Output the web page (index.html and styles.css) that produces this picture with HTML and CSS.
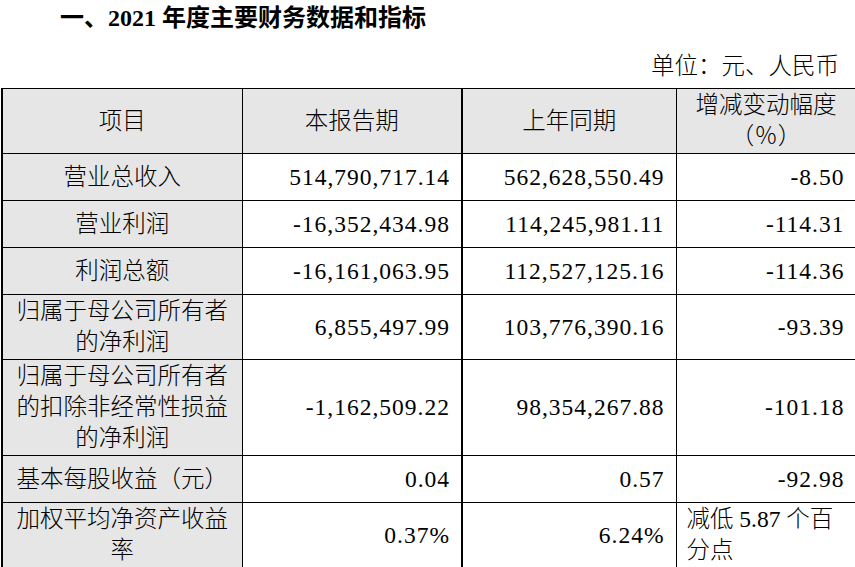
FILE: index.html
```html
<!DOCTYPE html>
<html lang="zh-CN">
<head>
<meta charset="utf-8">
<title>2021 年度主要财务数据和指标</title>
<link rel="stylesheet" href="styles.css">
</head>
<body>
<h1 class="title">一、2021 年度主要财务数据和指标</h1>
<p class="unit">单位：元、人民币</p>
<table class="fin">
  <colgroup>
    <col class="c1"><col class="c2"><col class="c3"><col class="c4">
  </colgroup>
  <thead>
    <tr class="head">
      <th class="label">项目</th>
      <th>本报告期</th>
      <th class="split">上年同期</th>
      <th>增减变动幅度（％）</th>
    </tr>
  </thead>
  <tbody>
    <tr>
      <td class="label">营业总收入</td>
      <td class="num">514,790,717.14</td>
      <td class="num split">562,628,550.49</td>
      <td class="num">-8.50</td>
    </tr>
    <tr>
      <td class="label">营业利润</td>
      <td class="num">-16,352,434.98</td>
      <td class="num split">114,245,981.11</td>
      <td class="num">-114.31</td>
    </tr>
    <tr>
      <td class="label">利润总额</td>
      <td class="num">-16,161,063.95</td>
      <td class="num split">112,527,125.16</td>
      <td class="num">-114.36</td>
    </tr>
    <tr>
      <td class="label">归属于母公司所有者的净利润</td>
      <td class="num">6,855,497.99</td>
      <td class="num split">103,776,390.16</td>
      <td class="num">-93.39</td>
    </tr>
    <tr>
      <td class="label">归属于母公司所有者的扣除非经常性损益的净利润</td>
      <td class="num">-1,162,509.22</td>
      <td class="num split">98,354,267.88</td>
      <td class="num">-101.18</td>
    </tr>
    <tr>
      <td class="label">基本每股收益（元）</td>
      <td class="num">0.04</td>
      <td class="num split">0.57</td>
      <td class="num">-92.98</td>
    </tr>
    <tr>
      <td class="label">加权平均净资产收益率</td>
      <td class="num">0.37%</td>
      <td class="num split">6.24%</td>
      <td class="text">减低 5.87 个百分点</td>
    </tr>
    <tr>
      <td class="label">&nbsp;</td>
      <td class="num">&nbsp;</td>
      <td class="num split">&nbsp;</td>
      <td class="num">&nbsp;</td>
    </tr>
  </tbody>
</table>
</body>
</html>
```
FILE: styles.css
```css
html, body {
  margin: 0;
  padding: 0;
  background: #ffffff;
}
body {
  width: 855px;
  overflow: hidden;
  color: #000000;
  font-family: "Liberation Serif", "Noto Sans CJK SC", serif;
}
.title {
  margin: 0;
  padding-left: 60px;
  font-size: 24px;
  line-height: 36px;
  font-weight: 700;
}
.unit {
  margin: 15px 16px 6px 0;
  text-align: right;
  font-size: 23.5px;
  line-height: 31px;
  font-weight: 300;
}
.fin {
  margin-left: 1px;
  width: 854px;
  table-layout: fixed;
  border-collapse: collapse;
  border-left: 2px solid #000;
  font-size: 23.5px;
  line-height: 31px;
}
.c1 { width: 240px; }
.c2 { width: 220px; }
.c3 { width: 214px; }
.c4 { width: 180px; }
.fin th,
.fin td {
  border: 1px solid #000;
  padding: 1px 11px;
  height: 47px;
  vertical-align: middle;
  font-weight: 300;
  box-sizing: border-box;
}
.fin .head th {
  background: #e6e6e6;
  text-align: center;
  height: 63px;
}
.fin td.label {
  background: #e6e6e6;
  text-align: center;
  padding: 1px 10px;
}
.fin .num {
  text-align: right;
  white-space: nowrap;
  letter-spacing: 1px;
}
.fin .text {
  text-align: left;
  padding-left: 10px;
}
.fin .split {
  border-left: 2px solid #000;
}
```
